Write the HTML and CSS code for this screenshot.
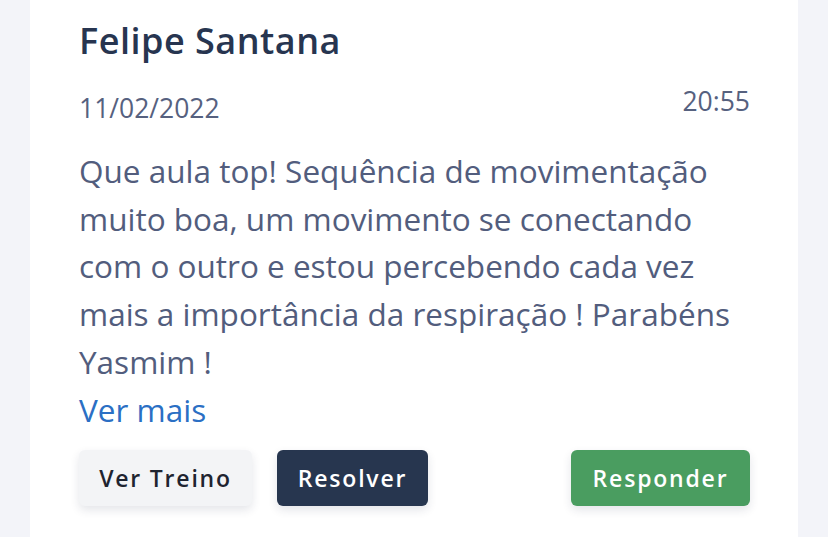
FILE: index.html
```html
<!DOCTYPE html>
<html lang="pt-BR">
<head>
<meta charset="utf-8">
<link rel="stylesheet" href="styles.css">
</head>
<body>
<div class="page">
  <div class="card">
    <h2 class="name">Felipe Santana</h2>
    <div class="meta">
      <span class="date">11/02/2022</span>
      <span class="time">20:55</span>
    </div>
    <p class="comment">Que aula top! Sequência de movimentação<br>muito boa, um movimento se conectando<br>com o outro e estou percebendo cada vez<br>mais a importância da respiração ! Parabéns<br>Yasmim !</p>
    <a class="more" href="#">Ver mais</a>
    <div class="actions">
      <button class="btn btn-light">Ver Treino</button>
      <button class="btn btn-dark">Resolver</button>
      <span class="spacer"></span>
      <button class="btn btn-green">Responder</button>
    </div>
  </div>
</div>
</body>
</html>
```
FILE: styles.css
```css
html, body {
  margin: 0;
  padding: 0;
  height: 100%;
}
body {
  background: #f3f4f9;
  font-family: "Open Sans", "Noto Sans", sans-serif;
  overflow: hidden;
}
.page {
  padding: 0 30px;
  height: 100%;
}
.card {
  background: #ffffff;
  height: 100%;
  box-sizing: border-box;
  padding: 20px 48px 0 49px;
}
.name {
  margin: 0;
  font-size: 36px;
  font-weight: 600;
  color: #273550;
  line-height: 42px;
  letter-spacing: 0.5px;
}
.meta {
  display: flex;
  justify-content: space-between;
  align-items: flex-start;
  margin-top: 24px;
  color: #56617f;
  font-size: 26.5px;
  line-height: 30px;
}
.date {
  padding-top: 7px;
}
.comment {
  margin: 24px 0 0 0;
  font-size: 31.5px;
  line-height: 47.7px;
  color: #525d7d;
  white-space: nowrap;
}
.more {
  display: block;
  font-size: 31.5px;
  line-height: 47.7px;
  color: #2b6fc4;
  text-decoration: none;
}
.actions {
  display: flex;
  align-items: center;
  gap: 25px;
  margin-top: 17px;
}
.spacer {
  flex: 1;
}
.btn {
  height: 56px;
  border: none;
  border-radius: 6px;
  font-family: inherit;
  font-size: 23px;
  font-weight: 600;
  letter-spacing: 1.8px;
  padding: 0 6px;
  box-shadow: 0 4px 10px rgba(30, 40, 70, 0.12);
}
.btn-light {
  background: #f3f4f6;
  color: #1f2430;
  width: 173px;
}
.btn-dark {
  background: #27364f;
  color: #ffffff;
  width: 151px;
}
.btn-green {
  background: #4a9d60;
  color: #ffffff;
  width: 179px;
}
```
